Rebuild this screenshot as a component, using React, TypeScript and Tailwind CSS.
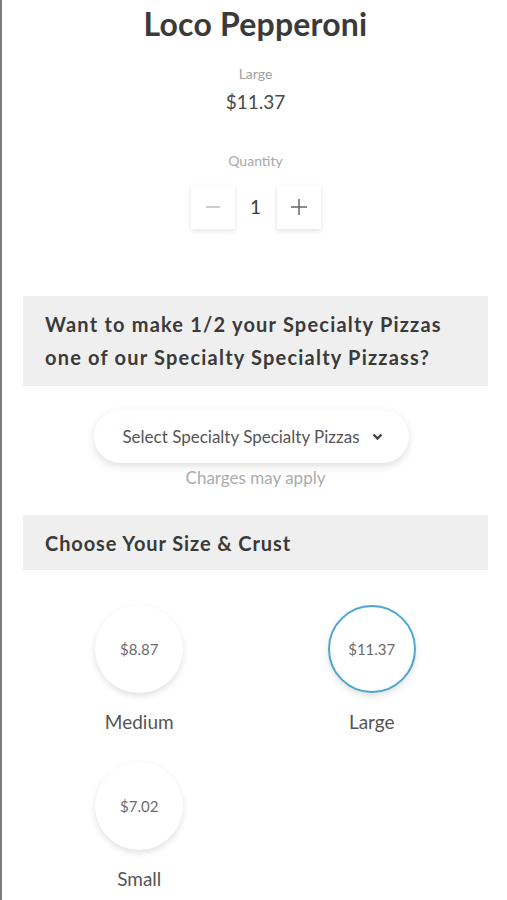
import React from "react";

const font = { fontFamily: "Lato, 'Noto Sans', sans-serif" };

function SizeOption({ price, label, selected }: { price: string; label: string; selected?: boolean }) {
  return (
    <div className="flex flex-col items-center">
      <div
        className={
          "flex h-[88px] w-[88px] items-center justify-center rounded-full bg-white text-[15px] text-[#6b6b6b] shadow-[0_3px_6px_rgba(0,0,0,0.12)] " +
          (selected ? "border-2 border-[#4ca7cf]" : "")
        }
      >
        {price}
      </div>
      <div className="mt-[16px] text-[19px] leading-[26px] text-[#555]">{label}</div>
    </div>
  );
}

export default function App() {
  return (
    <div
      className="min-h-[900px] w-[507px] border-l-2 border-[#7c7c7c] bg-white pl-[21px] pr-[19px] text-[#3a3a3a]"
      style={font}
    >
      <div className="flex flex-col items-center">
        <h1 className="mt-[4px] text-[32px] font-bold leading-[40px] tracking-[0.2px] text-[#3a3a3a]">
          Loco Pepperoni
        </h1>
        <div className="mt-[21px] text-[14px] leading-[18px] text-[#a0a0a0]">Large</div>
        <div className="mt-[6px] text-[19px] leading-[26px] text-[#4a4a4a]">$11.37</div>
        <div className="mt-[37px] text-[14px] leading-[18px] text-[#a8a8a8]">Quantity</div>
        <div className="mt-[15px] flex items-center gap-[9px]">
          <button className="flex h-[44px] w-[44px] items-center justify-center bg-white shadow-[0_2px_5px_rgba(0,0,0,0.1)]">
            <svg width="16" height="16" viewBox="0 0 16 16">
              <line x1="1" y1="8" x2="15" y2="8" stroke="#bdbdbd" strokeWidth="1.5" />
            </svg>
          </button>
          <div className="w-[24px] text-center text-[19px] text-[#3a3a3a]">1</div>
          <button className="flex h-[44px] w-[44px] items-center justify-center bg-white shadow-[0_2px_5px_rgba(0,0,0,0.12)]">
            <svg width="18" height="18" viewBox="0 0 18 18">
              <line x1="1" y1="9" x2="17" y2="9" stroke="#666" strokeWidth="1.5" />
              <line x1="9" y1="1" x2="9" y2="17" stroke="#666" strokeWidth="1.5" />
            </svg>
          </button>
        </div>
      </div>

      <div className="mt-[67px] bg-[#efefef] px-[22px] py-[12px]">
        <p className="text-[20px] font-bold leading-[33px] tracking-[1.2px] text-[#3a3a3a]">
          Want to make 1/2 your Specialty Pizzas
          <br />
          one of our Specialty Specialty Pizzass?
        </p>
      </div>

      <div className="flex flex-col items-center">
        <button className="mr-[8px] mt-[24px] flex h-[53px] w-[315px] items-center justify-center gap-[12px] rounded-full bg-white pl-[2px] text-[17px] text-[#555] shadow-[0_3px_8px_rgba(0,0,0,0.13)]">
          <span>Select Specialty Specialty Pizzas</span>
          <svg width="11" height="8" viewBox="0 0 11 8">
            <polyline points="1.5,1.5 5.5,5.5 9.5,1.5" fill="none" stroke="#444" strokeWidth="2.4" />
          </svg>
        </button>
        <div className="mt-[3px] text-[17px] leading-[24px] text-[#ababab]">Charges may apply</div>
      </div>

      <div className="mt-[25px] flex h-[55px] items-center bg-[#efefef] px-[22px]">
        <p className="text-[20px] font-bold tracking-[0.9px] text-[#3a3a3a]">Choose Your Size &amp; Crust</p>
      </div>

      <div className="mt-[35px] grid grid-cols-2 gap-y-[27px]">
        <SizeOption price="$8.87" label="Medium" />
        <SizeOption price="$11.37" label="Large" selected />
        <SizeOption price="$7.02" label="Small" />
      </div>
    </div>
  );
}
